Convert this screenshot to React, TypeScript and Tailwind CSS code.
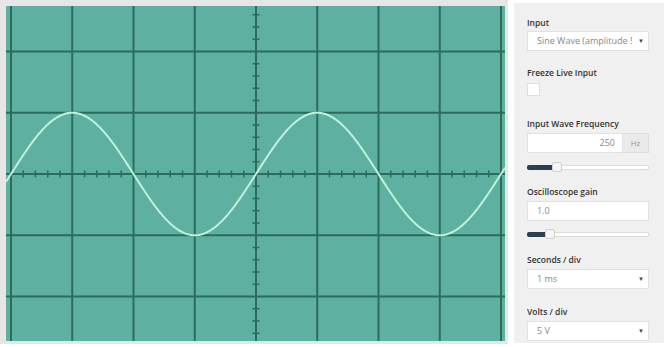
import React from "react";

const W = 499;
const H = 335;
const DIV = 61.25;
const X0 = 5;
const CY = 168;

function Scope() {
  const vLines = Array.from({ length: 9 }, (_, i) => X0 + i * DIV);
  const hLines = [-2, -1, 0, 1, 2].map((k) => CY + k * DIV);
  const cx = X0 + 4 * DIV;

  // ticks along the two centre axes
  const ticks: React.ReactNode[] = [];
  for (let i = -25; i <= 25; i++) {
    if (i % 5 === 0) continue;
    const x = cx + i * (DIV / 5);
    if (x > 0 && x < W) {
      ticks.push(<line key={"tx" + i} x1={x} x2={x} y1={CY - 3.5} y2={CY + 3.5} />);
    }
    const y = CY + i * (DIV / 5);
    if (y > 0 && y < H) {
      ticks.push(<line key={"ty" + i} x1={cx - 3.5} x2={cx + 3.5} y1={y} y2={y} />);
    }
  }

  // sine wave, 4 divisions per period, 1 division amplitude
  let d = "";
  for (let x = 0; x <= W; x += 1) {
    const y = CY - DIV * Math.sin((2 * Math.PI * (x - X0)) / (4 * DIV));
    d += (x === 0 ? "M" : "L") + x.toFixed(1) + " " + y.toFixed(2) + " ";
  }

  return (
    <svg width={W} height={H} viewBox={`0 0 ${W} ${H}`} className="block">
      <rect width={W} height={H} fill="#5eb1a0" />
      <g stroke="#2b6c5c" strokeWidth={2}>
        {vLines.map((x) => (
          <line key={"v" + x} x1={x} x2={x} y1={0} y2={H} />
        ))}
        {hLines.map((y) => (
          <line key={"h" + y} x1={0} x2={W} y1={y} y2={y} />
        ))}
      </g>
      <g stroke="#2b6c5c" strokeWidth={1.5}>{ticks}</g>
      <path d={d} fill="none" stroke="#bff2dc" strokeWidth={2} />
    </svg>
  );
}

const Label = ({ children, className = "" }: { children: React.ReactNode; className?: string }) => (
  <div className={`text-[8.5px] leading-[12px] font-semibold text-[#333] ${className}`}>{children}</div>
);

const Select = ({ value, className = "" }: { value: string; className?: string }) => (
  <div
    className={`h-[20px] bg-white border border-[#e2e2e2] flex items-center pl-[9px] pr-[4px] text-[9px] text-[#888] ${className}`}
  >
    <span className="flex-1 overflow-hidden whitespace-nowrap">{value}</span>
    <span className="text-[6px] text-[#444] pl-[6px]">▼</span>
  </div>
);

const Slider = ({ pos, className = "" }: { pos: number; className?: string }) => (
  <div className={`relative h-[10px] ${className}`}>
    <div className="absolute left-0 right-0 top-[3px] h-[5px] bg-white border border-[#dcdcdc] rounded-[2px]" />
    <div
      className="absolute left-0 top-[3px] h-[5px] bg-[#2c3e50] rounded-l-[2px]"
      style={{ width: pos }}
    />
    <div
      className="absolute top-0 h-[10px] w-[10px] bg-[#f5f5f5] border border-[#cfcfcf] rounded-[2px]"
      style={{ left: pos - 1 }}
    />
  </div>
);

export default function App() {
  return (
    <div
      className="w-[664px] h-[347px] bg-white flex overflow-hidden"
      style={{ fontFamily: '"Open Sans", "Liberation Sans", sans-serif' }}
    >
      <div className="w-[508px] h-[344px] shrink-0 bg-[#e6e6e6] pl-[6px] pt-[6px]">
        <Scope />
      </div>

      <div className="ml-[6px] mt-[3px] w-[150px] h-[340px] shrink-0 bg-[#f0f0f0] pl-[13px] pr-[15px] pt-[14px]">
        <Label>Input</Label>
        <Select value="Sine Wave (amplitude 5 V)" className="mt-[2px]" />

        <Label className="mt-[16px]">Freeze Live Input</Label>
        <div className="mt-[4px] w-[13px] h-[13px] bg-white border border-[#dedede]" />

        <Label className="mt-[22px]">Input Wave Frequency</Label>
        <div className="mt-[3px] flex h-[20px]">
          <div className="flex-1 bg-white border border-[#e2e2e2] flex items-center justify-end pr-[7px] text-[9px] text-[#888]">
            250
          </div>
          <div className="w-[26px] bg-[#eaeaea] border border-l-0 border-[#dedede] flex items-center justify-center text-[8px] text-[#999]">
            Hz
          </div>
        </div>
        <Slider pos={26} className="mt-[9px]" />

        <Label className="mt-[14px]">Oscilloscope gain</Label>
        <div className="mt-[3px] h-[20px] bg-white border border-[#e2e2e2] flex items-center pl-[9px] text-[9px] text-[#888]">
          1.0
        </div>
        <Slider pos={19} className="mt-[8px]" />

        <Label className="mt-[15px]">Seconds / div</Label>
        <Select value="1 ms" className="mt-[3px]" />

        <Label className="mt-[17px]">Volts / div</Label>
        <Select value="5 V" className="mt-[3px]" />
      </div>
    </div>
  );
}
